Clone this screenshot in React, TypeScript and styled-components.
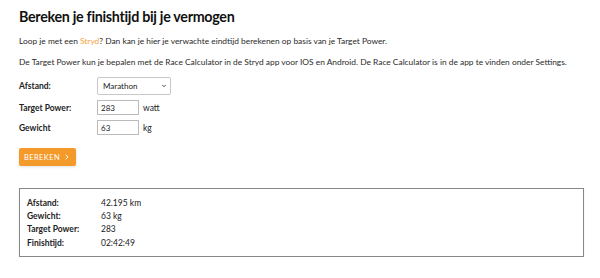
import React from "react";
import styled, { createGlobalStyle } from "styled-components";
import { ChevronRight, ChevronDown } from "lucide-react";

const GlobalStyle = createGlobalStyle`
  body {
    margin: 0;
    background: #fff;
    color: #222;
    font-family: "Lato", "Open Sans", sans-serif;
  }
`;

const Page = styled.main`
  padding: 7px 16px 0 19px;
`;

const Title = styled.h1`
  margin: 0 0 8px;
  font-size: 14.3px;
  letter-spacing: -0.3px;
  line-height: 20px;
  font-weight: 700;
  color: #111;
`;

const Text = styled.p`
  margin: 0 0 9px;
  font-size: 8.4px;
  line-height: 12px;
  color: #2a2a2a;
`;

const Link = styled.a`
  color: #f5a13a;
  text-decoration: none;
`;

const Form = styled.form`
  display: grid;
  grid-template-columns: 78px auto;
  align-items: center;
  row-gap: 5px;
  margin-top: 3px;
`;

const Label = styled.label`
  font-size: 8.5px;
  font-weight: 700;
`;

const Field = styled.div`
  display: flex;
  align-items: center;
  gap: 4px;
  font-size: 8.5px;
`;

const SelectWrap = styled.div`
  position: relative;
  width: 74px;
  height: 18px;

  svg {
    position: absolute;
    right: 4px;
    top: 6px;
    pointer-events: none;
  }
`;

const Select = styled.select`
  appearance: none;
  box-sizing: border-box;
  width: 100%;
  height: 100%;
  font-family: inherit;
  font-size: 8px;
  padding: 0 5px;
  border: 1px solid #c8c8c8;
  border-radius: 2px;
  background: #fff;
  color: #222;
`;

const Input = styled.input`
  box-sizing: border-box;
  width: 42px;
  height: 15px;
  padding: 0 3px;
  font-family: inherit;
  font-size: 8px;
  border: 1px solid #bbb;
  color: #222;
`;

const Button = styled.button`
  margin-top: 13px;
  height: 18px;
  width: 57px;
  border: 0;
  border-radius: 2px;
  background: #f39a2b;
  color: #fff;
  font-family: inherit;
  font-size: 7.5px;
  letter-spacing: 0.4px;
  display: flex;
  align-items: center;
  justify-content: center;
  gap: 3px;
  padding: 0;
  box-shadow: 0 1px 3px rgba(0, 0, 0, 0.12);
`;

const Result = styled.section`
  margin-top: 22px;
  width: 565px;
  box-sizing: border-box;
  border: 1px solid #888;
  box-shadow: 0 1px 1px rgba(0, 0, 0, 0.15);
  padding: 7px 7px 7px;
  display: grid;
  grid-template-columns: 74px auto;
  grid-auto-rows: 13.3px;
  align-items: center;
  font-size: 8.5px;
`;

const Key = styled.span`
  font-weight: 700;
`;

const results: [string, string][] = [
  ["Afstand:", "42.195 km"],
  ["Gewicht:", "63 kg"],
  ["Target Power:", "283"],
  ["Finishtijd:", "02:42:49"],
];

export default function App() {
  return (
    <Page>
      <GlobalStyle />
      <Title>Bereken je finishtijd bij je vermogen</Title>
      <Text>
        Loop je met een <Link href="#">Stryd</Link>? Dan kan je hier je verwachte eindtijd berekenen op basis van je
        Target Power.
      </Text>
      <Text>
        De Target Power kun je bepalen met de Race Calculator in de Stryd app voor IOS en Android. De Race Calculator is
        in de app te vinden onder Settings.
      </Text>
      <Form onSubmit={(e) => e.preventDefault()}>
        <Label>Afstand:</Label>
        <Field>
          <SelectWrap>
            <Select defaultValue="marathon">
              <option value="5k">5 km</option>
              <option value="10k">10 km</option>
              <option value="half">Halve marathon</option>
              <option value="marathon">Marathon</option>
            </Select>
            <ChevronDown size={6} strokeWidth={3.5} color="#333" />
          </SelectWrap>
        </Field>
        <Label>Target Power:</Label>
        <Field>
          <Input defaultValue="283" />
          watt
        </Field>
        <Label>Gewicht</Label>
        <Field>
          <Input defaultValue="63" />
          kg
        </Field>
      </Form>
      <Button type="button">
        BEREKEN <ChevronRight size={8} strokeWidth={3} />
      </Button>
      <Result>
        {results.map(([k, v]) => (
          <React.Fragment key={k}>
            <Key>{k}</Key>
            <span>{v}</span>
          </React.Fragment>
        ))}
      </Result>
    </Page>
  );
}
